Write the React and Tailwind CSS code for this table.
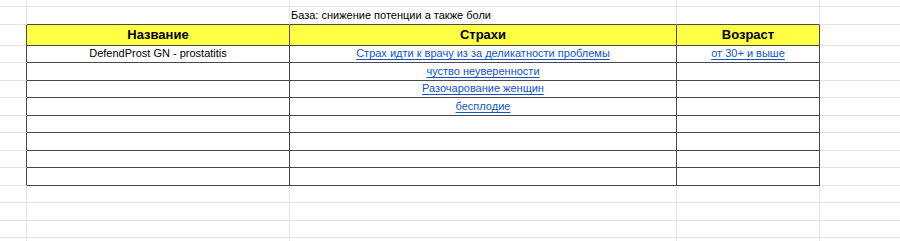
import React from "react";

const LIGHT = "border-[#e2e3e3]";
const DARK = "border-[#4a4a4a]";

// sheet rows: height in px (bottom grid line included)
const rows = [
  { h: 7 },
  { h: 18, kind: "title" },
  { h: 20, kind: "head" },
  { h: 18, kind: "body", name: "DefendProst GN - prostatitis", fear: "Страх идти к врачу из за деликатности проблемы", age: "от 30+ и выше" },
  { h: 18, kind: "body", fear: "чуство неуверенности" },
  { h: 17, kind: "body", fear: "Разочарование женщин" },
  { h: 18, kind: "body", fear: "бесплодие" },
  { h: 17, kind: "body" },
  { h: 18, kind: "body" },
  { h: 17, kind: "body" },
  { h: 18, kind: "body", last: true },
  { h: 17 },
  { h: 18 },
  { h: 17 },
  { h: 10 },
];

const Link = ({ children }) => (
  <span className="text-[#1155cc] underline underline-offset-2">{children}</span>
);

const App = () => {
  return (
    <div
      className="w-[900px] h-[241px] overflow-hidden bg-white text-[11px] text-black"
      style={{ fontFamily: '"Liberation Sans", Arial, sans-serif' }}
    >
      {rows.map((r, i) => {
        const inTable = r.kind === "head" || r.kind === "body";
        const topOfTable = r.kind === "title";
        return (
          <div
            key={i}
            className="grid grid-cols-[27px_263px_387px_143px_1fr]"
            style={{ height: r.h }}
          >
            <div className={`border-r border-b border-[#e2e3e3] ${inTable ? "!border-r-[#4a4a4a]" : ""}`} />

            {/* B */}
            <div
              className={`border-r border-b ${inTable ? DARK : LIGHT} ${
                topOfTable ? "!border-b-[#4a4a4a]" : ""
              } ${r.kind === "head" ? "bg-[#ffff44]" : ""}`}
            >
              {r.kind === "head" && (
                <div className="flex h-full items-center justify-center text-[13px] font-bold">
                  Название
                </div>
              )}
              {r.name && (
                <div className="flex h-full items-end justify-center pb-[2px] leading-[13px]">{r.name}</div>
              )}
            </div>

            {/* C */}
            <div
              className={`relative border-r border-b ${inTable ? DARK : LIGHT} ${
                topOfTable ? "!border-b-[#4a4a4a]" : ""
              } ${r.kind === "head" ? "bg-[#ffff44]" : ""}`}
            >
              {r.kind === "title" && (
                <div className="flex h-full items-end pl-[1px] pb-[2px] whitespace-nowrap leading-[13px]">
                  База: снижение потенции а также боли
                </div>
              )}
              {r.kind === "head" && (
                <div className="flex h-full items-center justify-center text-[13px] font-bold">
                  Страхи
                </div>
              )}
              {r.fear && (
                <div className="flex h-full items-end justify-center pb-[2px] leading-[13px]">
                  <Link>{r.fear}</Link>
                </div>
              )}
            </div>

            {/* D */}
            <div
              className={`border-r border-b ${inTable ? DARK : LIGHT} ${
                topOfTable ? "!border-b-[#4a4a4a]" : ""
              } ${r.kind === "head" ? "bg-[#ffff44]" : ""}`}
            >
              {r.kind === "head" && (
                <div className="flex h-full items-center justify-center text-[13px] font-bold">
                  Возраст
                </div>
              )}
              {r.age && (
                <div className="flex h-full items-end justify-center pb-[2px] leading-[13px]">
                  <Link>{r.age}</Link>
                </div>
              )}
            </div>

            {/* E */}
            <div className={`border-b ${LIGHT}`} />
          </div>
        );
      })}
    </div>
  );
};

export default App;
